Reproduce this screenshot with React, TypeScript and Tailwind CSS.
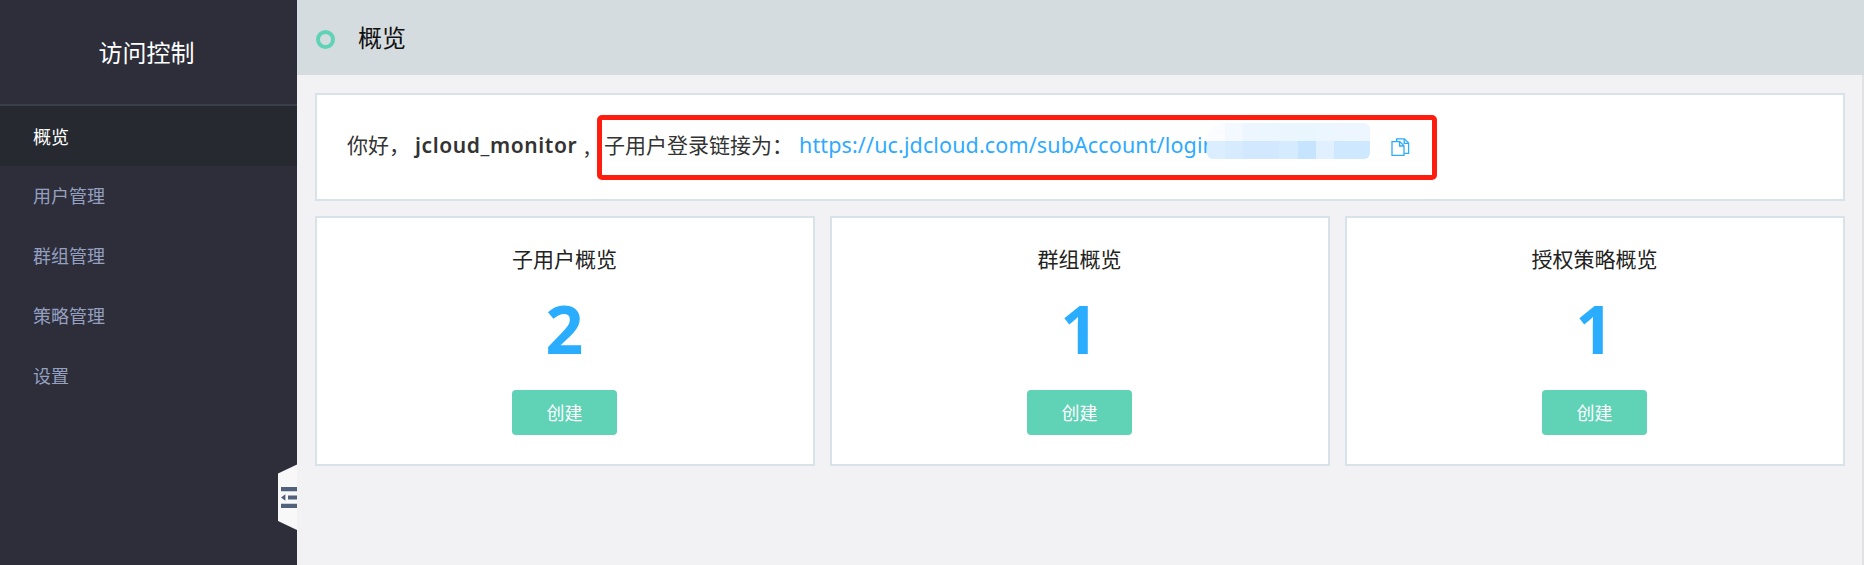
const menu = ["概览", "用户管理", "群组管理", "策略管理", "设置"];

const cards = [
  { title: "子用户概览", count: 2 },
  { title: "群组概览", count: 1 },
  { title: "授权策略概览", count: 1 },
];

const maskTop = ["#fafcff", "#f3f9ff", "#edf6fe", "#ecf6fe", "#eaf5fe", "#eaf6fe", "#ecf6ff", "#edf6fe", "#edf6fe"];
const maskBottom = ["#dbeeff", "#d6ebfe", "#d1e8fe", "#d1e8fe", "#d5ecff", "#c7e4ff", "#e0f0ff", "#cde8ff", "#cde8ff"];

function Sidebar() {
  return (
    <aside className="relative flex w-[297px] shrink-0 flex-col bg-[#2d2e3a]">
      <div className="flex h-[106px] items-center justify-center border-b-2 border-[#3a3f4c] pr-[4px] text-2xl text-white">
        访问控制
      </div>
      <nav className="flex flex-col text-lg">
        {menu.map((label, i) => (
          <a
            key={label}
            className={
              i === 0
                ? "flex h-[60px] items-center bg-[#262930] pb-px pl-[33px] text-white"
                : "flex h-[60px] items-center pb-[2px] pl-[33px] text-[#95a0c0]"
            }
          >
            {label}
          </a>
        ))}
      </nav>
      <button className="absolute top-[464px] right-0 h-[66px] w-[19px]" aria-label="收起">
        <svg width="19" height="66" viewBox="0 0 19 66" className="block">
          <path d="M0 9.5 19 .5V66L0 57Z" fill="#f8f8f8" />
          <path d="M3 23h16v4.2H3zM10 31.5h9v4H10zM3 39.8h16V44H3zM7.4 30.2v6.6L3 33.5z" fill="#51617c" />
        </svg>
      </button>
    </aside>
  );
}

function CopyIcon() {
  return (
    <svg width="19" height="19" viewBox="0 0 19 19" fill="none" stroke="#2eaaff" strokeWidth="1.3">
      <path d="M1 3.6h7.8l4.2 4.2V17.4H1z" />
      <path d="M8.6 3.8V8h4.2" />
      <path d="M5.6 3.4V.9h7.8l4.2 4.2v10.2h-4.4" />
      <path d="M13.2 1v4.3h4.2" />
    </svg>
  );
}

function Greeting() {
  return (
    <section className="relative flex h-[108px] items-center border-2 border-[#d8e2e9] bg-white pb-[3px] pl-[30px] text-[21px] whitespace-nowrap text-[#333]">
      <span className="w-[68px] pb-[2px]">你好，</span>
      <b className="w-[169px] font-['Noto_Sans'] text-[21px] font-semibold tracking-[0.6px]">jcloud_monitor</b>
      <span className="w-[20px]">,</span>
      <span className="w-[195px] pb-[2px]">子用户登录链接为：</span>
      <a className="w-[408px] font-['Noto_Sans'] text-[21.5px] tracking-[0.13px] text-[#2eaaff]">
        https://uc.jdcloud.com/subAccount/login
      </a>
      <div className="relative mb-[9px] h-9 w-[163px] overflow-hidden rounded-md rounded-tl-2xl">
        {[maskTop, maskBottom].map((row, r) => (
          <div key={r} className="flex h-[18px]">
            {row.map((color, i) => (
              <span key={i} className="h-full w-[18px] shrink-0 grow" style={{ backgroundColor: color }} />
            ))}
          </div>
        ))}
      </div>
      <span className="mt-1 ml-[21px]">
        <CopyIcon />
      </span>
      <div className="absolute top-[20px] left-[280px] h-[65px] w-[840px] rounded-[5px] border-[5px] border-[#ff1d0f]" />
    </section>
  );
}

export default function App() {
  return (
    <div className="flex h-[565px] w-[1864px] overflow-hidden bg-[#f2f2f4] font-['Noto_Sans_CJK_SC',sans-serif]">
      <Sidebar />
      <main className="flex flex-1 flex-col border-r-2 border-[#e2e2e5]">
        <header className="-mr-[2px] flex h-[75px] items-center bg-[#d5dcdf] pb-px pl-[19px] text-2xl text-[#111]">
          <span className="mt-[4px] mr-[23px] size-[19px] rounded-full border-[4.5px] border-[#60d2b6]" />
          <h1 className="pb-px">概览</h1>
        </header>
        <div className="flex flex-col gap-[15px] pt-[18px] pr-[17px] pl-[18px]">
          <Greeting />
          <div className="grid grid-cols-3 gap-[15px]">
            {cards.map((c) => (
              <section key={c.title} className="flex h-[250px] flex-col items-center border-2 border-[#d8e2e9] bg-white pt-[24px] pr-px">
                <h2 className="h-[32px] text-[21px] leading-[32px] text-[#222]">{c.title}</h2>
                <div className="mt-[14px] h-[80px] font-['Noto_Sans'] text-[66px] leading-[80px] font-bold text-[#2aadff]">
                  {c.count}
                </div>
                <button className="mt-[22px] flex h-[45px] w-[105px] items-center justify-center rounded bg-[#60d2b6] pb-[2px] text-lg text-white">
                  创建
                </button>
              </section>
            ))}
          </div>
        </div>
      </main>
    </div>
  );
}
